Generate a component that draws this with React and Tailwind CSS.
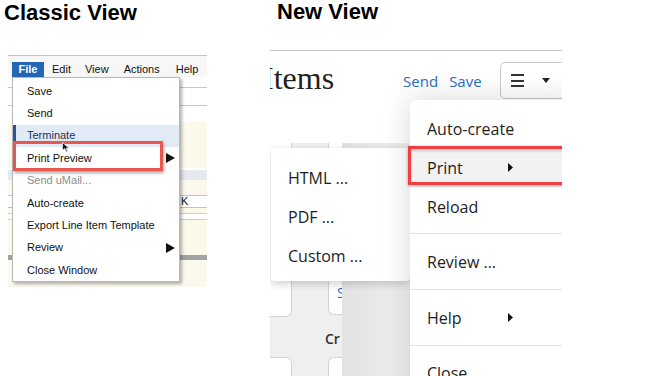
import React from "react";

function Tri({ className, w = 8, h = 10 }) {
  return (
    <svg className={className} width={w} height={h} viewBox="0 0 8 10" preserveAspectRatio="none">
      <path d="M0 0 L8 5 L0 10 Z" fill="#111" />
    </svg>
  );
}

function ClassicItem({ label, arrow, muted, active }) {
  return (
    <div
      className={`relative h-[22.4px] flex items-center pl-[14px] ${
        active ? "bg-[#e2eaf5]" : ""
      }`}
    >
      {active && <span className="absolute left-0 top-0 bottom-0 w-[3px] bg-[#2a5896]" />}
      <span className={muted ? "text-[#8c8c8c]" : active ? "text-[#1b3459]" : "text-[#111]"}>
        {label}
      </span>
      {arrow && <Tri className="absolute left-[153px]" w={9} h={10} />}
    </div>
  );
}

function ClassicShot() {
  return (
    <div className="relative ml-[4px] w-[199px] h-[232px] border-t border-[#c4c4c4] overflow-hidden text-[11px] leading-none">
      {/* menu bar */}
      <div className="h-[21px] bg-[#f7f7f7] flex items-end">
        <div className="ml-[4px] w-[32px] h-[15px] bg-[#2366b3] text-white font-bold flex items-center justify-center">
          File
        </div>
        <span className="ml-[8px] h-[15px] flex items-center text-[#111]">Edit</span>
        <span className="ml-[14px] h-[15px] flex items-center text-[#111]">View</span>
        <span className="ml-[15px] h-[15px] flex items-center text-[#111]">Actions</span>
        <span className="ml-[16px] h-[15px] flex items-center text-[#111]">Help</span>
      </div>

      {/* form behind the menu */}
      <div className="h-[210px] flex flex-col">
        <div className="h-[10px] bg-white" />
        <div className="h-[1px] bg-[#c8c8c8]" />
        <div className="h-[17px] bg-white" />
        <div className="h-[1px] bg-[#c8c8c8]" />
        <div className="h-[16px] bg-white" />
        <div className="h-[46px] bg-[#fbf9ea]" />
        <div className="h-[2px] bg-white" />
        <div className="h-[10px] bg-[#e6e9ef]" />
        <div className="h-[15px] bg-[#fbf9ee]" />
        <div className="h-[13px] bg-white border-y border-[#c2c2c2] flex items-center pl-[173px] text-[#111]">
          K
        </div>
        <div className="h-[5px] bg-[#fbf9ea]" />
        <div className="h-[1px] bg-[#cfcfcf]" />
        <div className="h-[5px] bg-white" />
        <div className="h-[1px] bg-[#cfcfcf]" />
        <div className="h-[35px] bg-[#fbf9ea]" />
        <div className="h-[5px] bg-[#a3a3a3]" />
        <div className="h-[27px] bg-[#fbf9ee]" />
      </div>

      {/* dropdown */}
      <div className="absolute left-[4px] top-[21px] w-[168px] h-[205px] bg-white border border-[#b9b9b9] shadow-[2px_2px_3px_rgba(0,0,0,0.3)] pt-[2px]">
        <ClassicItem label="Save" />
        <ClassicItem label="Send" />
        <ClassicItem label="Terminate" active />
        <ClassicItem label="Print Preview" arrow />
        <ClassicItem label="Send uMail..." muted />
        <ClassicItem label="Auto-create" />
        <ClassicItem label="Export Line Item Template" />
        <ClassicItem label="Review" arrow />
        <ClassicItem label="Close Window" />
      </div>

      {/* highlight box */}
      <div className="absolute left-[5px] top-[85px] w-[150px] h-[30px] border-[3px] border-[#e8574d] shadow-[1px_2px_3px_rgba(0,0,0,0.35)]" />

      {/* mouse pointer */}
      <svg className="absolute left-[54px] top-[86px]" width="8" height="11" viewBox="0 0 8 11">
        <path d="M0.5 0.5 L0.5 8.5 L2.6 6.6 L4.3 10 L5.6 9.4 L4 6.2 L7 6.2 Z" fill="#111" stroke="#fff" strokeWidth="0.7" />
      </svg>
    </div>
  );
}

function MenuItem({ label, arrow, hover }) {
  return (
    <div className={`relative h-[39px] flex items-center pl-[17px] ${hover ? "bg-[#f2f2f2]" : ""}`}>
      <span>{label}</span>
      {arrow && <Tri className="absolute left-[98px]" w={5} h={9} />}
    </div>
  );
}

function NewShot() {
  return (
    <div className="relative w-[292px] h-[326px] border-t border-[#c6c6c6] overflow-hidden bg-[#efefef] font-['Open_Sans',sans-serif]">
      {/* page header */}
      <div className="h-[92px] bg-white flex items-start">
        <span className="-ml-[7px] mt-[11px] font-['Liberation_Serif',serif] text-[32px] leading-none text-[#222]">
          Items
        </span>
        <span className="ml-[69px] mt-[23px] text-[15px] leading-none text-[#2a6fbf]">Send</span>
        <span className="ml-[11px] mt-[23px] text-[15px] leading-none text-[#2a6fbf]">Save</span>
        <div className="ml-[18px] mt-[11px] w-[70px] h-[37px] shrink-0 border border-[#c9c9c9] rounded-[5px] flex items-center pl-[10px]">
          <div className="w-[13px] flex flex-col gap-[3.5px]">
            <span className="h-[2px] bg-[#333]" />
            <span className="h-[2px] bg-[#333]" />
            <span className="h-[2px] bg-[#333]" />
          </div>
          <svg className="ml-[18px]" width="8" height="5" viewBox="0 0 8 5">
            <path d="M0 0 L8 0 L4 5 Z" fill="#222" />
          </svg>
        </div>
      </div>

      {/* page body */}
      <div className="h-[233px] flex">
        <div className="w-[72px] flex flex-col">
          <div className="h-[174px] flex">
            <div className="w-[22px] bg-white border-r border-b border-[#d4d4d4] rounded-br-[6px]" />
            <div className="ml-[36px] w-[14px] h-[172px] bg-white border-l border-b border-[#d4d4d4] rounded-bl-[6px] overflow-hidden pt-[143px] pl-[8px] text-[14px] leading-none text-[#2a6fbf]">
              S
            </div>
          </div>
          <div className="h-[40px] pt-[15px] pl-[55px] overflow-hidden whitespace-nowrap text-[14px] leading-none font-semibold text-[#333]">
            Cr
          </div>
          <div className="h-[19px] flex">
            <div className="w-[22px] bg-white border-t border-r border-[#d4d4d4] rounded-tr-[6px]" />
            <div className="ml-[36px] w-[14px] bg-white border-t border-l border-[#d4d4d4] rounded-tl-[6px]" />
          </div>
        </div>
        <div className="flex-1 bg-gradient-to-r from-[#e2e2e2] via-[#f9f9f9] to-white" />
      </div>

      {/* print submenu */}
      <div className="absolute left-[1px] top-[97px] w-[139px] h-[133px] bg-white rounded-b-[4px] shadow-[0_3px_8px_rgba(0,0,0,0.18)] pt-[10px] text-[16px] leading-none text-[#1d1d1d]">
        <MenuItem label="HTML ..." />
        <MenuItem label="PDF ..." />
        <MenuItem label="Custom ..." />
      </div>

      {/* actions menu */}
      <div className="absolute left-[140px] top-[49px] w-[170px] h-[300px] bg-white rounded-tl-[6px] shadow-[0_0_30px_rgba(0,0,0,0.16)] text-[16px] leading-none text-[#1d1d1d]">
        <div className="pt-[9px] pb-[7px] border-b border-[#e3e3e3]">
          <MenuItem label="Auto-create" />
          <MenuItem label="Print" arrow hover />
          <MenuItem label="Reload" />
        </div>
        <div className="pt-[8px] pb-[8px] border-b border-[#e3e3e3]">
          <MenuItem label="Review ..." />
        </div>
        <div className="pt-[8px] pb-[8px] border-b border-[#e3e3e3]">
          <MenuItem label="Help" arrow />
        </div>
        <div className="pt-[7px]">
          <MenuItem label="Close" />
        </div>
      </div>

      {/* highlight box */}
      <div className="absolute left-[138px] top-[95px] w-[160px] h-[39px] border-[3px] border-[#ef3f43] shadow-[inset_0_2px_3px_rgba(0,0,0,0.18),0_1px_3px_rgba(0,0,0,0.3)]" />
    </div>
  );
}

export default function App() {
  return (
    <div className="w-[671px] h-[376px] bg-white overflow-hidden flex font-['Liberation_Sans',Arial,sans-serif]">
      {/* Classic */}
      <div className="w-[270px] shrink-0 pl-[4px]">
        <h1 className="mt-[2px] text-[22px] font-bold leading-none text-black">Classic View</h1>
        <div className="mt-[31px]">
          <ClassicShot />
        </div>
      </div>
      {/* New */}
      <div className="flex-1">
        <h1 className="mt-[1px] pl-[7px] text-[22px] font-bold leading-none text-black">New View</h1>
        <div className="mt-[27px]">
          <NewShot />
        </div>
      </div>
    </div>
  );
}
